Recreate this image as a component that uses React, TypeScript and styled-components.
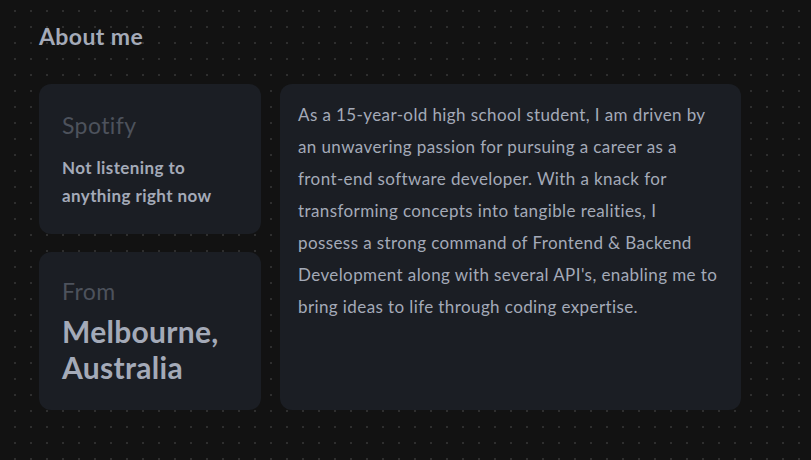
import React from 'react';
import styled, { createGlobalStyle } from 'styled-components';

const GlobalStyle = createGlobalStyle`
  html, body {
    margin: 0;
    padding: 0;
    background-color: #121212;
  }
  body {
    font-family: Lato, "Liberation Sans", sans-serif;
    background-image: radial-gradient(circle at 1px 1px, #2e2e2e 0.9px, transparent 1px);
    background-size: 16px 16px;
    background-position: 14px 10px;
    min-height: 460px;
  }
`;

const Page = styled.main`
  padding: 22px 38px 0 38px;
  width: 703px;
`;

const Heading = styled.h2`
  margin: 0 0 34px 1px;
  font-size: 23px;
  line-height: 28px;
  font-weight: 700;
  color: #a4aab8;
  letter-spacing: 0.4px;
`;

const Grid = styled.section`
  display: grid;
  grid-template-columns: 222px 1fr;
  gap: 19px;
  padding-left: 1px;
`;

const Column = styled.div`
  display: flex;
  flex-direction: column;
  gap: 18px;
`;

const Card = styled.div<{ $height?: number; $padTop?: number }>`
  background: #1b1e24;
  border-radius: 12px;
  padding: ${(p) => p.$padTop ?? 24}px 23px 20px 23px;
  box-sizing: border-box;
  height: ${(p) => (p.$height ? `${p.$height}px` : 'auto')};
`;

const BioCard = styled(Card)`
  padding: 15px 18px 20px 18px;
`;

const Label = styled.div<{ $gap: number }>`
  font-size: 23px;
  line-height: 32px;
  color: #4d525c;
  letter-spacing: 0.4px;
  margin-bottom: ${(p) => p.$gap}px;
`;

const Status = styled.p`
  margin: 0;
  font-size: 17px;
  line-height: 28px;
  font-weight: 700;
  color: #a4aab8;
  letter-spacing: 0.4px;
`;

const Place = styled.p`
  margin: 0;
  font-size: 30px;
  line-height: 36px;
  font-weight: 700;
  color: #a4aab8;
  letter-spacing: 0.3px;
`;

const Bio = styled.p`
  margin: 0;
  font-size: 17px;
  line-height: 32px;
  color: #a4aab8;
  letter-spacing: 0.4px;
  white-space: nowrap;
`;

const bioLines = [
  'As a 15-year-old high school student, I am driven by',
  'an unwavering passion for pursuing a career as a',
  'front-end software developer. With a knack for',
  'transforming concepts into tangible realities, I',
  'possess a strong command of Frontend & Backend',
  "Development along with several API's, enabling me to",
  'bring ideas to life through coding expertise.',
];

export default function App() {
  return (
    <>
      <GlobalStyle />
      <Page>
        <Heading>About me</Heading>
        <Grid>
          <Column>
            <Card $height={150} $padTop={25}>
              <Label $gap={13}>Spotify</Label>
              <Status>
                Not listening to
                <br />
                anything right now
              </Status>
            </Card>
            <Card $height={158} $padTop={23}>
              <Label $gap={6}>From</Label>
              <Place>
                Melbourne,
                <br />
                Australia
              </Place>
            </Card>
          </Column>
          <BioCard>
            <Bio>
              {bioLines.map((line, i) => (
                <React.Fragment key={i}>
                  {line}
                  {i < bioLines.length - 1 && <br />}
                </React.Fragment>
              ))}
            </Bio>
          </BioCard>
        </Grid>
      </Page>
    </>
  );
}
